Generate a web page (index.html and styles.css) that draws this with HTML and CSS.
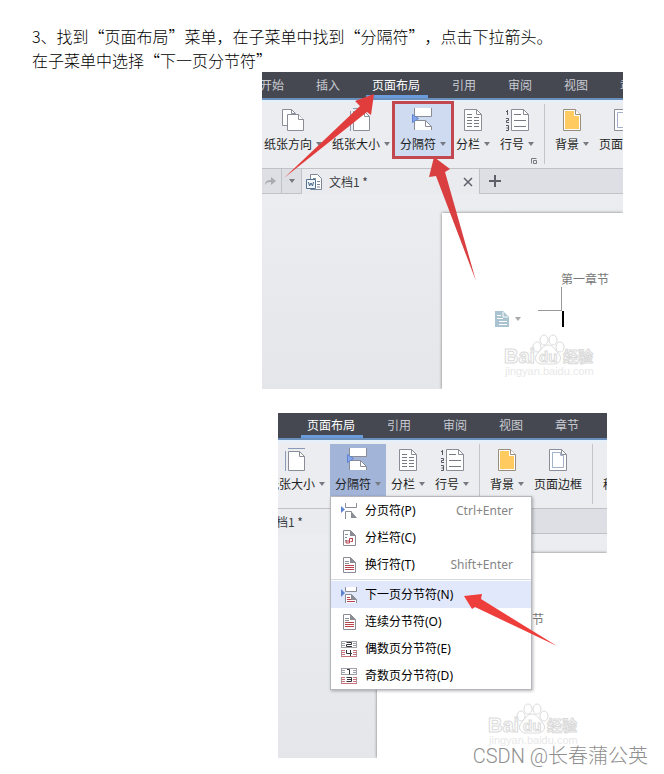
FILE: index.html
```html
<!DOCTYPE html>
<html lang="zh-CN">
<head>
    <meta charset="UTF-8">
    <meta name="viewport" content="width=device-width, initial-scale=1.0">
    <title>下一页分节符</title>
    <link rel="stylesheet" href="styles.css">
</head>
<body>
    <!-- Shared icons -->
    <svg class="sprite" aria-hidden="true">
        <symbol id="i-orient" viewBox="0 0 24 24">
            <path d="M1.500 1.500h9l4 4v12h-13z" fill="#fff" stroke="#8b8d96"/>
            <path d="M10.500 1.500v4h4" fill="none" stroke="#8b8d96"/>
            <path d="M6.500 6.500h11l5 5v11h-16z" fill="#fff" stroke="#8b8d96"/>
            <path d="M17.500 6.500v5h5" fill="#fff" stroke="#8b8d96"/>
        </symbol>
        <symbol id="i-size" viewBox="0 0 24 24">
            <path d="M4 .5h17M1.500 3v20" fill="none" stroke="#8b9ab8"/>
            <path d="M4.500 3.500h11l5 5v14h-16z" fill="#fff" stroke="#8b8d96"/>
            <path d="M15.500 3.500v5h5" fill="none" stroke="#8b8d96"/>
        </symbol>
        <symbol id="i-break" viewBox="0 0 24 24">
            <path d="M3.500 0v8.500h17v-8.500" fill="#fff" stroke="#8b8d96"/>
            <path d="M3.500 22v-9.500h11l6 6v3.500" fill="#fff" stroke="#8b8d96"/>
            <path d="M14.500 12.500v6h6" fill="none" stroke="#8b8d96"/>
            <path d="M1.500 6.500l6 4l-6 4z" fill="#86a6ec" stroke="#5f84cf"/>
        </symbol>
        <symbol id="i-columns" viewBox="0 0 24 24">
            <path d="M3.500 1.500h12l5 5v16h-17z" fill="#fff" stroke="#8b8d96"/>
            <path d="M15.500 1.500v5h5" fill="none" stroke="#8b8d96"/>
            <path d="M6 6.500h5M6 9.500h5M6 12.500h5M6 15.500h5M6 18.500h5M13 9.500h5M13 12.500h5M13 15.500h5M13 18.500h5" stroke="#777a83"/>
        </symbol>
        <symbol id="i-lines" viewBox="0 0 24 24">
            <path d="M6.500 1.500h12l5 5v16h-17z" fill="#fff" stroke="#8b8d96"/>
            <path d="M18.500 1.500v5h5" fill="none" stroke="#8b8d96"/>
            <path d="M9 6.500h7M9 12.500h12M9 18.500h12" stroke="#777a83"/>
            <path d="M1 3.500h1.500M2.500 2v5M1 10.500h2.500v2h-2v2h2.500M1 17.500h2.500v5h-2.500M1.500 20h2" fill="none" stroke="#555862"/>
        </symbol>
        <symbol id="i-back" viewBox="0 0 24 24">
            <path d="M3.500 1.500h12l5 5v16h-17z" fill="#fff" stroke="#9b8d7c"/>
            <path d="M5 3h9v5h5v13h-14z" fill="#ffcb60"/>
            <path d="M15.500 1.500v5h5" fill="#fff" stroke="#9b8d7c"/>
        </symbol>
        <symbol id="i-border" viewBox="0 0 24 24">
            <path d="M3.500 1.500h12l5 5v16h-17z" fill="#fff" stroke="#8b8d96"/>
            <path d="M6.500 4.500h8v3h3v12h-11z" fill="#fff" stroke="#a3b0ca"/>
            <path d="M15.500 1.500v5h5" fill="none" stroke="#8b8d96"/>
        </symbol>
        <symbol id="i-doc" viewBox="0 0 16 16">
            <path d="M4.500 .5h7l4 4v11h-11z" fill="#fff" stroke="#7b8797"/>
            <path d="M7 4.500h3M11 7.500h3M11 10.500h3M11 13h3" stroke="#7b8797"/>
            <path d="M.5 5.500h9v9h-9z" fill="#f2f6fa" stroke="#50718f"/>
            <path d="M2.500 8l1 4l1.500-3l1.500 3l1-4" fill="none" stroke="#3f6488"/>
        </symbol>
        <symbol id="m-page" viewBox="0 0 16 16">
            <path d="M4.500 0v4.500h11v-4.500M4.500 16v-7.500h6" fill="none" stroke="#8b8d96"/>
            <path d="M10 8l6 7h-6z" fill="#8b8d96"/>
            <path d="M0 3l4 3.500l-4 3.500z" fill="#5f84cf"/>
        </symbol>
        <symbol id="m-column" viewBox="0 0 16 16">
            <path d="M2.500 .5h7l5 5v10h-12z" fill="#fff" stroke="#8b8d96"/>
            <path d="M9 0l6 6h-6z" fill="#8b8d96"/>
            <path d="M4 4.500h3M4 7.500h2M4 10.500h2" stroke="#8b8d96"/>
            <path d="M12 8.500h-3.500v4.500h-3.500v-2h3M11.500 9v2.500h-2" fill="none" stroke="#b8434d"/>
        </symbol>
        <symbol id="m-line" viewBox="0 0 16 16">
            <path d="M2.500 .5h7l5 5v10h-12z" fill="#fff" stroke="#8b8d96"/>
            <path d="M9 0l6 6h-6z" fill="#8b8d96"/>
            <path d="M4 4.500h4M4 6.500h4" stroke="#8b8d96"/>
            <path d="M4 8.500h9M4 10.500h9M4 12.500h9" stroke="#b8434d"/>
        </symbol>
        <symbol id="m-next" viewBox="0 0 16 16">
            <path d="M4.500 0v4.500h11v-4.500M4.500 16v-8.500h6l5 5v3.500" fill="#fff" stroke="#8b8d96"/>
            <path d="M10 7l6 6h-6z" fill="#8b8d96"/>
            <path d="M6 10.500h3M6 12.500h4M6 14.500h8" stroke="#b8434d"/>
            <path d="M0 2l4 4l-4 4z" fill="#5f84cf"/>
        </symbol>
        <symbol id="m-even" viewBox="0 0 16 16">
            <path d="M0 .5h16M0 2.500h4M0 4.500h4M0 6.500h16M12 2.500h4M12 4.500h4M.5 0v7M15.500 0v7M.5 9v7M15.500 9v7" stroke="#a0a2aa"/>
            <path d="M0 9.500h4M12 9.500h4M0 11.500h4M12 11.500h4M0 13.500h4M12 13.500h4M0 15.500h16" stroke="#c8747c"/>
            <path d="M5.500 1.500h5v2h-5v2h5.500M5.500 9v3.500h5.500M9.500 9v6" fill="none" stroke="#33353b"/>
        </symbol>
        <symbol id="m-odd" viewBox="0 0 16 16">
            <path d="M0 .5h16M0 2.500h4M0 4.500h4M0 6.500h16M12 2.500h4M12 4.500h4M.5 0v7M15.500 0v7M.5 9v7M15.500 9v7" stroke="#a0a2aa"/>
            <path d="M0 9.500h4M12 9.500h4M0 11.500h4M12 11.500h4M0 13.500h4M12 13.500h4M0 15.500h16" stroke="#c8747c"/>
            <path d="M6 1.500h2.500v5M5.500 9.500h5v4h-5M6 11.500h4" fill="none" stroke="#33353b"/>
        </symbol>
        <symbol id="baidu" viewBox="0 0 96 46">
            <g fill="#fff" stroke="#dcdcdc">
                <ellipse cx="34" cy="13" rx="4" ry="5"/>
                <ellipse cx="41" cy="6" rx="4" ry="5"/>
                <ellipse cx="50" cy="6" rx="4" ry="5"/>
                <ellipse cx="57" cy="13" rx="4" ry="5"/>
                <path d="M45 11c5 0 7 5 10 8c5 5 2 11-4 11h-12c-6 0-9-6-4-11c3-3 5-8 10-8z"/>
            </g>
            <g class="mark-text">
                <text x="1" y="29" font-size="20">Bai</text>
                <text x="36" y="28" font-size="15">du</text>
                <text x="60" y="28" font-size="15">经验</text>
            </g>
            <text class="mark-url" x="2" y="41">jingyan.baidu.com</text>
        </symbol>
    </svg>

    <main class="article">
        <p>3、找到“页面布局”菜单，在子菜单中找到“分隔符”，点击下拉箭头。<br>在子菜单中选择“下一页分节符”</p>

        <figure class="shot shot-ribbon">
            <nav class="tabs">
                <a href="#">开始</a>
                <a href="#">插入</a>
                <a href="#" class="active">页面布局</a>
                <a href="#">引用</a>
                <a href="#">审阅</a>
                <a href="#">视图</a>
                <a href="#">章节</a>
            </nav>
            <div class="ribbon">
                <button class="tool"><svg class="icon"><use href="#i-orient"/></svg><span class="drop">纸张方向</span></button>
                <button class="tool"><svg class="icon"><use href="#i-size"/></svg><span class="drop">纸张大小</span></button>
                <button class="tool marked"><svg class="icon"><use href="#i-break"/></svg><span class="drop">分隔符</span></button>
                <button class="tool"><svg class="icon"><use href="#i-columns"/></svg><span class="drop">分栏</span></button>
                <button class="tool"><svg class="icon"><use href="#i-lines"/></svg><span class="drop">行号</span></button>
                <span class="divider"></span>
                <button class="tool"><svg class="icon"><use href="#i-back"/></svg><span class="drop">背景</span></button>
                <button class="tool"><svg class="icon"><use href="#i-border"/></svg><span>页面边框</span></button>
                <svg class="launcher" viewBox="0 0 6 6"><path d="M.5 5.500v-5h5M2.500 2.500h3v3h-3z" fill="none" stroke="#777a83"/></svg>
            </div>
            <div class="docs">
                <button class="redo" aria-label="恢复"><svg viewBox="0 0 12 10"><path d="M1 9c0-4 3-5 6-5v-3l5 4l-5 4v-3c-3 0-4 0-6 3z" fill="#a9abb2"/></svg></button>
                <button class="more" aria-label="更多"></button>
                <div class="doc">
                    <svg class="small"><use href="#i-doc"/></svg>
                    <span>文档1 *</span>
                    <button class="close" aria-label="关闭"><svg viewBox="0 0 10 10"><path d="M1 1l8 8M9 1l-8 8" stroke="#5d6069" stroke-width="1.500"/></svg></button>
                </div>
                <button class="add" aria-label="新建"><svg viewBox="0 0 12 12"><path d="M6 0v12M0 6h12" stroke="#5d6069" stroke-width="2"/></svg></button>
            </div>
            <div class="canvas">
                <div class="page">
                    <span class="heading">第一章节</span>
                    <div class="corner"></div>
                    <div class="caret-row">
                        <svg class="paste" viewBox="0 0 14 16"><path d="M0 0h8l6 6v10h-14z" fill="#a9c3d0"/><path d="M8 1v5h5" fill="none" stroke="#fff"/><path d="M2 4.500h4M2 7.500h6M4 10.500h8M4 13.500h8" stroke="#fff"/></svg>
                        <i class="arrow-down"></i>
                        <i class="caret"></i>
                    </div>
                </div>
            </div>
            <svg class="baidu"><use href="#baidu"/></svg>
            <svg class="pointers" viewBox="0 0 361 317" preserveAspectRatio="xMinYMin">
                <path d="M22 106L98 34L93 29L112 22L109 43L105 40Z" fill="#e23d3d"/>
                <path d="M214 209L174 104L167 105L172 85L188 97L183 100Z" fill="#d93f40"/>
            </svg>
        </figure>

        <figure class="shot shot-menu">
            <nav class="tabs">
                <a href="#" class="active">页面布局</a>
                <a href="#">引用</a>
                <a href="#">审阅</a>
                <a href="#">视图</a>
                <a href="#">章节</a>
            </nav>
            <div class="ribbon">
                <button class="tool"><svg class="icon"><use href="#i-size"/></svg><span class="drop">纸张大小</span></button>
                <div class="opener">
                    <button class="tool open"><svg class="icon"><use href="#i-break"/></svg><span class="drop">分隔符</span></button>
                    <div class="menu">
                        <button><svg class="small"><use href="#m-page"/></svg>分页符(P)<kbd>Ctrl+Enter</kbd></button>
                        <button><svg class="small"><use href="#m-column"/></svg>分栏符(C)</button>
                        <button><svg class="small"><use href="#m-line"/></svg>换行符(T)<kbd>Shift+Enter</kbd></button>
                        <hr>
                        <button class="selected"><svg class="small"><use href="#m-next"/></svg>下一页分节符(N)</button>
                        <button><svg class="small"><use href="#m-line"/></svg>连续分节符(O)</button>
                        <button><svg class="small"><use href="#m-even"/></svg>偶数页分节符(E)</button>
                        <button><svg class="small"><use href="#m-odd"/></svg>奇数页分节符(D)</button>
                    </div>
                </div>
                <button class="tool"><svg class="icon"><use href="#i-columns"/></svg><span class="drop">分栏</span></button>
                <button class="tool"><svg class="icon"><use href="#i-lines"/></svg><span class="drop">行号</span></button>
                <span class="divider"></span>
                <button class="tool"><svg class="icon"><use href="#i-back"/></svg><span class="drop">背景</span></button>
                <button class="tool"><svg class="icon"><use href="#i-border"/></svg><span>页面边框</span></button>
                <span class="divider"></span>
                <button class="tool"><svg class="icon"></svg><span>稿纸</span></button>
            </div>
            <div class="docs">
                <div class="doc">
                    <svg class="small"><use href="#i-doc"/></svg>
                    <span>文档1 *</span>
                </div>
            </div>
            <div class="canvas">
                <div class="page">
                    <span class="heading">第一章节</span>
                </div>
            </div>
            <svg class="baidu"><use href="#baidu"/></svg>
            <svg class="pointers" viewBox="0 0 329 345" preserveAspectRatio="xMinYMin">
                <path d="M279 233L197 194L194 196L186 183L204 181L203 186Z" fill="#ee3e3c"/>
            </svg>
        </figure>

        <div class="watermark">CSDN @长春蒲公英</div>
    </main>
</body>
</html>
```
FILE: styles.css
```css
* { box-sizing: border-box; }
body { margin: 0; background: #fff; color: #000; font-family: "Noto Sans CJK SC", sans-serif; }
button { margin: 0; padding: 0; border: none; background: none; color: inherit; font: inherit; cursor: pointer; }
a { color: inherit; text-decoration: none; }
svg { display: block; flex: none; }
.sprite { position: absolute; width: 0; height: 0; }

.article { position: relative; padding: 24px 0 16px; }
.article p { margin: 0 32px; font-size: 16px; font-weight: 300; line-height: 24px; text-spacing-trim: space-all; }

.shot { position: relative; overflow: hidden; background: #e9ebee; font-size: 12px; line-height: 16px; }
.shot-ribbon { margin: 0 41px 24px 262px; }
.shot-menu { margin: 0 57px 0 278px; }

/* Menu tabs */
.tabs { display: flex; height: 28px; background: #454851; border-bottom: 2px solid #6b8fbb; color: #c9cbd1; white-space: nowrap; }
.tabs a { position: relative; flex: none; padding: 5px 16px; }
.tabs .active { color: #fff; }
.tabs .active::after { content: ""; position: absolute; left: 10px; right: 8px; bottom: 0; height: 3px; background: #6a9bdb; }
.shot-ribbon .tabs a:first-child { margin-left: -18px; }
.shot-menu .tabs { height: 27px; padding-left: 13px; }
.shot-menu .tabs a { padding-top: 4px; }

/* Ribbon */
.ribbon { position: relative; display: flex; height: 68px; padding-top: 2px; background: #ecedf0; border-top: 2px solid #e4f0fc; color: #1d1f24; white-space: nowrap; }
.shot-ribbon .tool:first-child { margin-left: -3px; }
.shot-menu .ribbon > .tool:first-child { margin-left: -16px; }
.tool { display: flex; flex: none; flex-direction: column; align-items: center; gap: 4px; height: 52px; padding: 4px 5px; }
.icon { width: 24px; height: 24px; }
.drop { display: flex; align-items: center; gap: 4px; }
.drop::after, .arrow-down, .more::after { content: ""; border: 3px solid transparent; border-top: 4px solid #777a83; border-bottom: 0; }
.marked { background: #cfdbf1; outline: 3px solid #c2474f; }
.open { background: #a3b4d9; }
.divider { flex: none; width: 1px; height: 60px; margin: 0 5px; background: #c3c5ca; }
.launcher { position: absolute; left: 269px; bottom: 4px; width: 6px; height: 6px; }

/* Open documents */
.docs { display: flex; height: 26px; background: #dedfe4; border-top: 1px solid #c0c2c8; border-bottom: 1px solid #c0c2c8; color: #3a3c42; }
.redo { width: 20px; padding-left: 2px; border-right: 1px solid #c0c2c8; }
.redo svg { width: 12px; height: 10px; }
.more { display: flex; align-items: center; justify-content: center; width: 20px; border-right: 1px solid #c0c2c8; }
.doc { display: flex; flex: none; align-items: center; gap: 7px; width: 178px; height: 25px; padding: 0 6px 0 4px; background: #e9ebee; border-right: 1px solid #c0c2c8; }
.small { width: 16px; height: 16px; }
.close { margin-left: auto; }
.close svg { width: 10px; height: 10px; }
.add { padding: 0 9px; }
.add svg { width: 12px; height: 12px; }
.shot-menu .doc { margin-left: -41px; }

/* Document area */
.canvas { padding: 19px 0 0 180px; background: linear-gradient(#ebedf0, #e4e6e9); }
.page { height: 176px; padding-top: 58px; background: #fff; box-shadow: 0 0 3px #777; color: #777; white-space: nowrap; }
.heading { display: block; margin-left: 119px; }
.corner { width: 24px; height: 24px; margin-left: 96px; border-right: 1px solid #999; border-bottom: 1px solid #999; }
.caret-row { display: flex; align-items: center; margin-left: 53px; }
.paste { width: 14px; height: 16px; }
.arrow-down { margin: 0 41px 0 6px; border-top-color: #aaa; }
.caret { width: 2px; height: 16px; background: #000; }
.shot-menu .canvas { padding-left: 99px; }
.shot-menu .page { height: 205px; }

/* Section break menu */
.opener { position: relative; flex: none; }
.menu { position: absolute; z-index: 1; top: 52px; left: 0; width: 202px; background: #fff; border: 1px solid #b5b7bc; box-shadow: 1px 1px 3px rgba(0,0,0,0.3); color: #000; font-family: "Noto Sans", "Noto Sans CJK SC", sans-serif; }
.menu button { display: flex; align-items: center; width: 100%; height: 27px; padding: 0 18px 0 10px; }
.menu .small { margin-right: 8px; }
.menu kbd { margin-left: auto; color: #858585; font: inherit; }
.menu hr { margin: 1px 0; border: none; border-top: 1px solid #d5d9e2; }
.menu .selected { background: #e2e8fc; }

/* Marks over the screens */
.pointers { position: absolute; z-index: 2; top: 0; left: 0; width: 361px; height: 317px; pointer-events: none; }
.shot-menu .pointers { width: 329px; height: 345px; }
.baidu { position: absolute; right: 24px; bottom: 9px; width: 96px; height: 46px; }
.mark-text { fill: #fff; stroke: #dadada; stroke-width: 1px; font-family: "Liberation Sans", "Noto Sans CJK SC", sans-serif; font-weight: bold; }
.mark-url { fill: #e8e8e8; font: 11px "Liberation Sans", sans-serif; }
.watermark { position: absolute; right: 16px; bottom: 4px; color: #8f8f8f; font-family: Roboto, "Noto Sans CJK SC", sans-serif; font-size: 20px; font-weight: 300; line-height: 28px; white-space: nowrap; }
```
